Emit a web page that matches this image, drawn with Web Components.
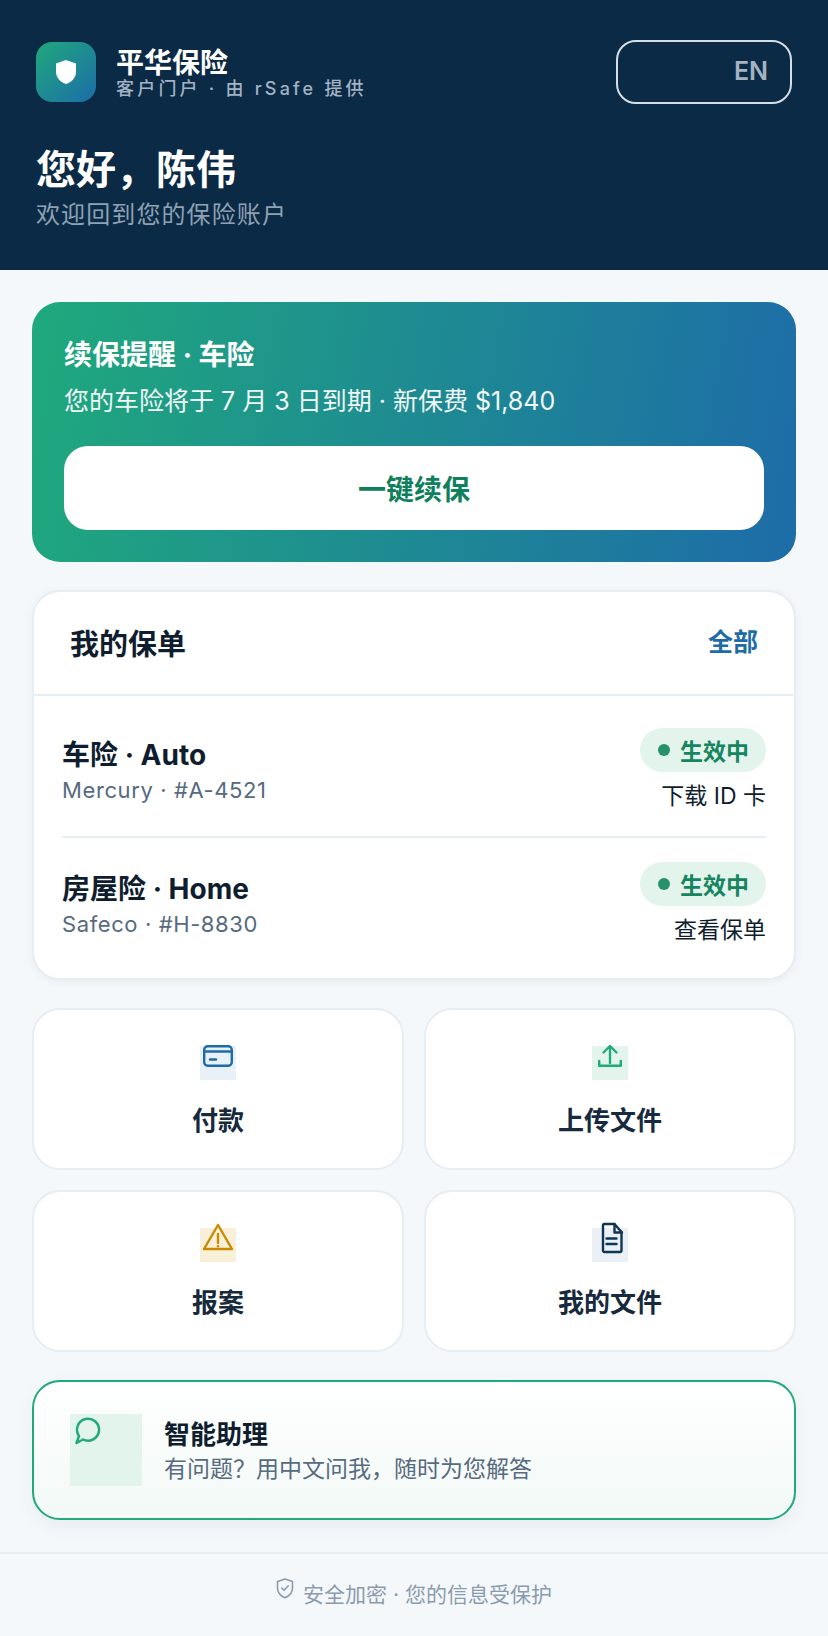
<!DOCTYPE html>
<html lang="zh"><head><meta charset="utf-8"><title>平华保险</title>
<style>
html,body{margin:0;padding:0}
body{width:828px;height:1636px;background:#f5f8fb;font-family:Inter,"Noto Sans CJK SC",sans-serif;color:#0f1e2e;overflow:hidden}
main-column{display:flex;flex-direction:column;padding:32px 32px 32px}
</style></head><body>
<app-header name="平华保险" tagline="客户门户 · 由 rSafe 提供" lang-label="EN" greeting="您好，陈伟" welcome="欢迎回到您的保险账户"></app-header>
<main-column>
  <renew-banner title="续保提醒 · 车险" detail="您的车险将于 7 月 3 日到期 · 新保费 $1,840" action="一键续保"></renew-banner>
  <policy-card heading="我的保单" link="全部">
    <policy-row name="车险 · Auto" meta="Mercury · #A-4521" status="生效中" action="下载 ID 卡"></policy-row>
    <policy-row name="房屋险 · Home" meta="Safeco · #H-8830" status="生效中" action="查看保单"></policy-row>
  </policy-card>
  <action-grid>
    <action-tile label="付款" tint="#e8f0f8"><svg viewBox="0 0 36 36" width="36" height="36" fill="none" stroke="#1d6ca8" stroke-width="2.4" stroke-linecap="round" stroke-linejoin="round"><rect x="4.2" y="9.2" width="27.6" height="19.6" rx="3.5"/><path d="M4.2 14.5h27.6"/><path d="M10 22.5h6"/></svg></action-tile>
    <action-tile label="上传文件" tint="#e3f4ed"><svg viewBox="0 0 36 36" width="36" height="36" fill="none" stroke="#1fa97c" stroke-width="2.4" stroke-linecap="round" stroke-linejoin="round"><path d="M18 26V9.5"/><path d="M11.5 15.5 18 9l6.500 6.500"/><path d="M7.200 24v4.800h21.600V24"/></svg></action-tile>
    <action-tile label="报案" tint="#f9f0da"><svg viewBox="0 0 36 36" width="36" height="36" fill="none" stroke="#c98a00" stroke-width="2.400" stroke-linecap="round" stroke-linejoin="round"><path d="M18 6 32 30H4Z"/><path d="M18 15v9"/><path d="M18 27.200v.1"/></svg></action-tile>
    <action-tile label="我的文件" tint="#eaf0f6"><svg viewBox="0 0 36 36" width="36" height="36" fill="none" stroke="#0f3554" stroke-width="2.400" stroke-linecap="round" stroke-linejoin="round"><path d="M13 5.200h10l7 8v18.500a1.500 1.500 0 0 1-1.500 1.500h-15.500a1.500 1.500 0 0 1-1.500-1.500V6.700a1.500 1.500 0 0 1 1.500-1.500Z" transform="translate(-.500 -.200)"/><path d="M22.500 5v8.500h7.500"/><path d="M14.500 19.500h10M14.500 25h10"/></svg></action-tile>
  </action-grid>
  <assistant-card heading="智能助理" detail="有问题？用中文问我，随时为您解答"></assistant-card>
</main-column>
<secure-footer text="安全加密 · 您的信息受保护"></secure-footer>
<script>
const attr=(el,n)=>el.getAttribute(n)||'';
function make(tag,render){
  customElements.define(tag,class extends HTMLElement{
    constructor(){super();this.attachShadow({mode:'open'});}
    connectedCallback(){this.shadowRoot.innerHTML=render(this);}
  });
}
make('app-header',e=>`<style>
:host{display:block;height:270px;box-sizing:border-box;background:#0b2a45;padding:40px 36px 0;color:#fff}
.top{display:flex;align-items:center;justify-content:space-between;height:64px}
.brand{display:flex;align-items:center;gap:20px}
.logo{width:60px;height:60px;border-radius:16px;background:linear-gradient(135deg,#1fa97c,#1d6ca8);display:flex;align-items:center;justify-content:center}
.logo svg{display:block}
.names{display:flex;flex-direction:column;margin-top:2px}
.name{font-size:28px;font-weight:700;line-height:32px}
.tag{font-size:18px;line-height:20px;letter-spacing:3.2px;color:#a3b3c4;font-weight:500}
.lang{width:176px;height:64px;box-sizing:border-box;border:2px solid #d5dde5;border-radius:20px;display:flex;align-items:center;justify-content:flex-end;padding:0 22px 2px 0;font-size:25px;font-weight:600;color:#a3b3c4}
.hi{font-size:40px;font-weight:700;line-height:52px;margin-top:40px}
.sub{font-size:24px;line-height:32px;color:#8fa2b5;letter-spacing:1.1px;margin-top:3px}
</style>
<div class="top"><div class="brand"><div class="logo"><svg width="20" height="24" viewBox="0 0 20 24"><path fill="#fff" d="M10 0 20 3.600v8.400C20 17.600 15.500 22.300 10 24 4.500 22.300 0 17.600 0 12V3.600Z"/></svg></div>
<div class="names"><div class="name">${attr(e,'name')}</div><div class="tag">${attr(e,'tagline')}</div></div></div>
<div class="lang">${attr(e,'lang-label')}</div></div>
<div class="hi">${attr(e,'greeting')}</div><div class="sub">${attr(e,'welcome')}</div>`);
make('renew-banner',e=>`<style>
:host{display:block;height:260px;box-sizing:border-box;border-radius:28px;padding:35px 32px 0;background:linear-gradient(100deg,#1fa97c,#1d6ca8);color:#fff}
.t{font-size:28px;font-weight:700;line-height:36px}
.d{font-size:25px;line-height:36px;margin-top:10px;color:#f0f7f6}
.b{height:84px;margin-top:27px;background:#fff;border-radius:24px;display:flex;align-items:center;justify-content:center;font-size:28px;font-weight:700;color:#0f7f5c}
</style><div class="t">${attr(e,'title')}</div><div class="d">${attr(e,'detail')}</div><div class="b">${attr(e,'action')}</div>`);
make('policy-card',e=>`<style>
:host{display:block;margin-top:28px;height:390px;box-sizing:border-box;background:#fff;border:2px solid #e6edf3;border-radius:28px;box-shadow:0 2px 8px rgba(15,42,69,.06)}
.h{display:flex;justify-content:space-between;align-items:center;height:104px;box-sizing:border-box;padding:0 36px;border-bottom:2px solid #e6edf3}
.t{font-size:29px;font-weight:700;color:#0f1e2e;margin-top:-2px}
.l{font-size:25px;font-weight:600;color:#1d6ca8;margin-top:-6px}
.list{display:block;padding:8px 28px}
</style><div class="h"><div class="t">${attr(e,'heading')}</div><div class="l">${attr(e,'link')}</div></div><div class="list"><slot></slot></div>`);
make('policy-row',e=>`<style>
:host{display:flex;justify-content:space-between;align-items:flex-start;box-sizing:border-box;height:134px;padding-top:24px;border-bottom:2px solid #e6edf3}
:host(:last-child){border-bottom:0}
.l{padding-top:9px}
.n{font-size:28px;font-weight:700;line-height:36px;color:#0f1e2e}
.m{font-size:22px;line-height:28px;color:#566a80;letter-spacing:.6px;margin-top:3px}
.r{display:flex;flex-direction:column;align-items:flex-end;gap:8px}
.p{display:flex;align-items:center;gap:10px;height:44px;padding:0 17px 0 18px;border-radius:22px;background:#e3f4ed;color:#15855f;font-size:23px;font-weight:600}
.dot{width:12px;height:12px;border-radius:50%;background:#27906c}
.a{font-size:23px;line-height:32px;color:#0f1e2e}
</style><div class="l"><div class="n">${attr(e,'name')}</div><div class="m">${attr(e,'meta')}</div></div>
<div class="r"><div class="p"><span class="dot"></span>${attr(e,'status')}</div><div class="a">${attr(e,'action')}</div></div>`);
make('action-grid',()=>`<style>:host{display:grid;grid-template-columns:1fr 1fr;gap:20px;margin-top:28px}</style><slot></slot>`);
make('action-tile',e=>`<style>
:host{display:flex;flex-direction:column;align-items:center;height:162px;box-sizing:border-box;background:#fff;border:2px solid #e6edf3;border-radius:28px;padding-top:36px}
.i{width:36px;height:34px;background:${attr(e,'tint')}}
::slotted(svg){display:block;margin-top:-9px}
.l{font-size:26px;font-weight:600;line-height:36px;margin-top:23px;color:#172a3d}
</style><div class="i"><slot></slot></div><div class="l">${attr(e,'label')}</div>`);
make('assistant-card',e=>`<style>
:host{display:flex;align-items:center;gap:22px;margin-top:28px;height:140px;box-sizing:border-box;padding:0 36px;border:2px solid #1fa97c;border-radius:28px;background:linear-gradient(180deg,#fff,#f2f9f6);box-shadow:0 6px 18px rgba(15,42,69,.06)}
.i{width:72px;height:72px;background:#e3f4ed;flex:none}
.i svg{display:block}
.x{margin-top:3px}
.t{font-size:26px;font-weight:700;line-height:34px;color:#0f1e2e}
.d{font-size:23px;line-height:32px;color:#566a80;margin-top:1px}
</style><div class="i"><svg width="36" height="36" viewBox="0 0 36 36" fill="none" stroke="#1fa97c" stroke-width="2.500" stroke-linejoin="round" stroke-linecap="round"><path d="M9 22A11 11 0 1 1 13 25.500L6.500 29Z"/></svg></div>
<div class="x"><div class="t">${attr(e,'heading')}</div><div class="d">${attr(e,'detail')}</div></div>`);
make('secure-footer',e=>`<style>
:host{display:flex;align-items:center;justify-content:center;gap:9px;height:84px;box-sizing:border-box;border-top:2px solid #e6edf3;color:#8a9bb0;font-size:21px;padding-bottom:4px}
svg{display:block;margin-bottom:10px}
</style><svg width="18" height="21" viewBox="0 0 18 21" fill="none" stroke="#8a9bb0" stroke-width="1.600" stroke-linecap="round" stroke-linejoin="round"><path d="M9 1 16.500 3.500V10C16.500 14.800 13.300 18 9 19.800 4.700 18 1.500 14.800 1.500 10V3.500Z"/><path d="M5.800 10 8 12.300 12.300 7.800"/></svg><span>${attr(e,'text')}</span>`);
</script>
</body></html>
